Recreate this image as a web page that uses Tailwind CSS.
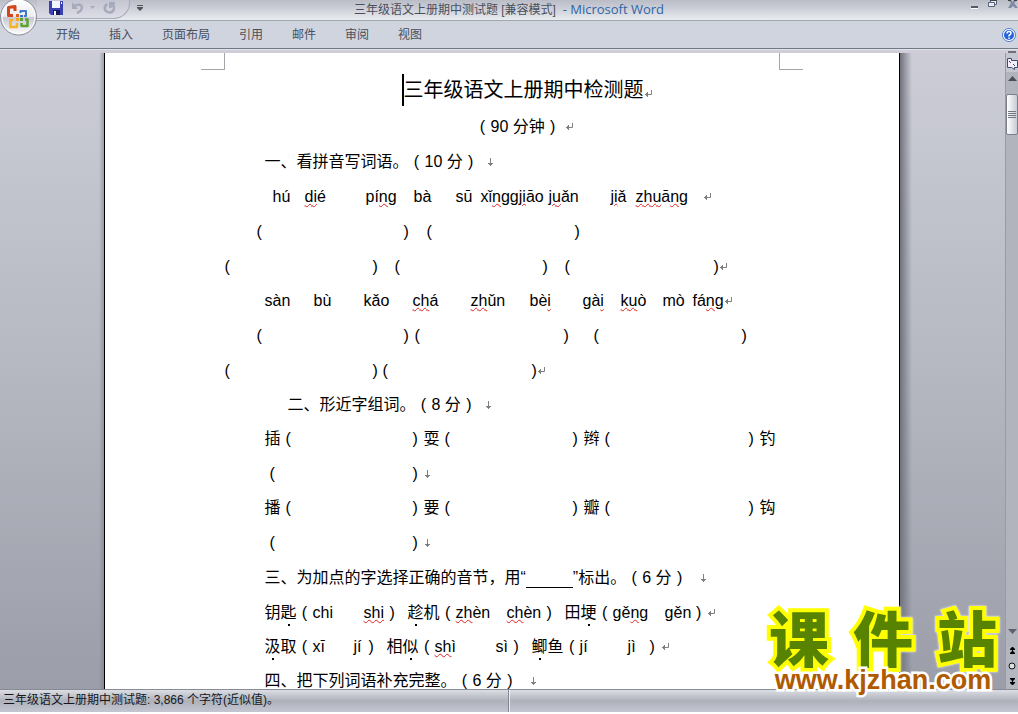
<!DOCTYPE html>
<html lang="zh-CN">
<head>
<meta charset="utf-8">
<meta name="viewport" content="width=device-width, initial-scale=1">
<title>三年级语文上册期中测试题 - Microsoft Word</title>
<script src="https://cdn.jsdelivr.net/npm/@tailwindcss/browser@4"></script>
</head>
<body class="relative flex h-screen flex-col overflow-hidden bg-[#d0d4de] font-['Liberation_Sans','Noto_Sans_CJK_SC',sans-serif] text-black">
<svg class="hidden">
  <symbol id="ret" viewBox="0 0 8 8"><path d="M7.5 0v4.5H1M3.5 2v5M2.5 3v3M1.5 4v1" fill="none" stroke="#808080"/></symbol>
  <symbol id="down" viewBox="0 0 8 8"><path d="M3.5 0v8M1 5.5h5M2 6.5h3" fill="none" stroke="#808080"/></symbol>
</svg>

<header class="relative shrink-0 text-xs text-[#4a4f5c]">
  <div class="relative flex h-[21px] items-start justify-center border-b border-[#9fa8b0] bg-linear-to-b from-[#babdc6] via-[#cfd2da] to-[#e9edef]">
    <div class="absolute top-0 left-[37px] flex h-[19px] w-[93px] items-start rounded-br-2xl border-r border-b border-[#a8abb8] bg-linear-to-b from-[#c4c5d0] to-[#dcdde6] pl-3">
      <button aria-label="保存" class="mt-px"><svg width="14" height="14" viewBox="0 0 14 14"><path d="M0 0h14v14H2L0 12z" fill="#3b41b5"/><path d="M3 0h8v7H3z" fill="#f2f4ff"/><path d="M4 9h7v5H4z" fill="#161a55"/><path d="M5 10h2v4H5z" fill="#fff"/><path d="M12 1h1v2h-1z" fill="#fff"/></svg></button>
      <button aria-label="撤消" class="mt-px ml-2"><svg width="13" height="14" viewBox="0 0 13 14"><path d="M3 5q7-3 8 1 0 4-5 6" fill="none" stroke="#a6aabd" stroke-width="2.500"/><path d="M1 1v7h6z" fill="#a6aabd"/></svg></button>
      <button aria-label="撤消选项" class="mt-1.5 ml-1.5"><svg width="5" height="3" viewBox="0 0 5 3"><path d="M0 0h5L2.500 3z" fill="#a6aabd"/></svg></button>
      <button aria-label="恢复" class="mt-px ml-2"><svg width="13" height="14" viewBox="0 0 13 14"><path d="M4 3q-4 4-1 7 4 3 7 0 2-3 0-6" fill="none" stroke="#a6aabd" stroke-width="2.500"/><path d="M6 1h6v2L8 7H6z" fill="#a6aabd"/></svg></button>
    </div>
    <button aria-label="自定义快速访问工具栏" class="absolute top-[5px] left-[137px]"><svg width="6" height="6" viewBox="0 0 6 6"><path d="M0 0h6v1H0zM0 2h6v1L3 6 0 3z" fill="#555"/></svg></button>
    <h1 class="leading-[18px] whitespace-pre">三年级语文上册期中测试题 [兼容模式] <span class="font-['Open_Sans',sans-serif] text-[13px] text-[#2f65a5]"> - Microsoft Word</span></h1>
    <div class="absolute top-0 right-0 flex items-start gap-[9px]">
      <button aria-label="最小化" class="pt-1.5"><svg width="8" height="3" viewBox="0 0 8 3"><path d="M0 0h7v2H0z" fill="#555b66"/><path d="M0 2h7v1H0z" fill="#fff"/></svg></button>
      <button aria-label="还原"><svg width="10" height="8" viewBox="0 0 10 8"><path d="M2.500 2V.5h6v4H7M.5 2.500h6v4h-6z" fill="#e8edf8" stroke="#5a6378"/><path d="M2 0h7v1H2z" fill="#444"/></svg></button>
      <button aria-label="关闭"><svg width="11" height="8" viewBox="0 0 11 8"><path d="M1 8h3l2-2 2 2h3L7 3l3-3H7L5.500 2 4 0H1l3 3z" fill="#7f8ba3"/><path d="M1 0h3v1H1zM7 0h3v1H7z" fill="#444"/></svg></button>
    </div>
  </div>
  <nav class="flex h-7 items-center gap-[29px] border-b border-[#737883] bg-[#d0d4de] pl-14">
    <button>开始</button><button>插入</button><button>页面布局</button><button>引用</button><button>邮件</button><button>审阅</button><button>视图</button>
    <button aria-label="帮助" class="mr-0.5 ml-auto"><svg width="14" height="14" viewBox="0 0 14 14"><circle cx="7" cy="7" r="6.500" fill="#fff" stroke="#4d7dd0"/><circle cx="7" cy="7" r="5" fill="#2563dc"/><path d="M5 5.500q0-2 2-2t2 1.700Q9 6.300 7 7.500V8.500M7 9.500v1.500" fill="none" stroke="#fff" stroke-width="1.500"/></svg></button>
  </nav>
  <div class="flex h-1 items-end justify-end border-t border-[#dbe6ef] bg-[#d0cdd8] pr-0.5"><i class="h-0.5 w-2 bg-[#6f727b]"></i></div>
  <button aria-label="Office 按钮" class="absolute -top-0.5 left-0">
    <svg width="38" height="38" viewBox="0 0 38 38"><defs><linearGradient id="orb" x2="0" y2="1"><stop offset="0" stop-color="#fff"/><stop offset=".48" stop-color="#ededf3"/><stop offset=".52" stop-color="#c6c7d2"/><stop offset="1" stop-color="#fff"/></linearGradient></defs>
    <circle cx="18.500" cy="19" r="18" fill="url(#orb)" stroke="#8b8d98"/><circle cx="18.500" cy="19" r="16.500" fill="none" stroke="#fff"/>
    <g fill="none" stroke-linejoin="round"><path d="M13 17.500H8.500v-8L15 8.500V13" stroke="#d2461a" stroke-width="3"/><path d="M20.500 15v-2h5.500v5h-2" stroke="#3a7cc9" stroke-width="2"/><path d="M13 22h-2.500v7h6.500v-4" stroke="#f5b32a" stroke-width="2.500"/><path d="M25 21.500h2.500v6.500h-6v-3" stroke="#5ba431" stroke-width="2.500"/></g><path d="M16 16h3v3h-3z" fill="#e0601c"/><path d="M20 17h3v2h-3z" fill="#2f6fc4"/><path d="M16 20h3v3h-3z" fill="#f2a61d"/><path d="M20 20h3v3h-3z" fill="#5ba431"/></svg>
  </button>
</header>

<div class="flex min-h-0 flex-1">
  <main class="flex min-w-0 flex-1 justify-center overflow-hidden bg-linear-to-b from-[#cccdd7] via-[#b5b8c1] to-[#9b9ea8]">
    <div class="w-2.5 shrink-0 bg-linear-to-l from-[#70737d]/50 to-transparent to-50%"></div>
    <article class="w-[796px] shrink-0 border-x border-black bg-white text-base whitespace-nowrap">
      <div class="flex h-[17px] justify-between px-24"><div class="w-6 border-r border-b border-[#a5a5ac]"></div><div class="w-6 border-b border-l border-[#a5a5ac]"></div></div>
      <div class="pl-[120px]">
        <div class="flex h-10 items-center pl-[177px]"><span class="h-8 w-0.5 bg-black"></span><h2 class="text-xl leading-10">三年级语文上册期中检测题</h2><svg class="mt-2 size-2"><use href="#ret"/></svg></div>
        <div class="flex h-[34px] items-center pl-[250px]"><span class="w-4 text-center">(</span>90 分钟<span class="w-4 text-center">)</span><svg class="ml-1 size-2"><use href="#ret"/></svg></div>
        <div class="flex h-[35px] items-center pl-10">一、看拼音写词语。<span class="w-4 text-center">(</span>10 分<span class="w-4 text-center">)</span><svg class="ml-2 size-2"><use href="#down"/></svg></div>

        <div class="flex h-[35px] items-center pl-12"><span class="w-8">hú</span><span class="w-[61px]"><u class="decoration-wavy decoration-1 decoration-[#e02020]">di</u>é</span><span class="w-12">pí<u class="decoration-wavy decoration-1 decoration-[#e02020]">ng</u></span><span class="w-[42px]">bà</span><span class="w-[25px]">sū</span><span class="w-[68px]">xǐ<u class="decoration-wavy decoration-1 decoration-[#e02020]">ngg</u><u class="decoration-wavy decoration-1 decoration-[#e02020]">ji</u>āo</span><span class="w-[62px]"><u class="decoration-wavy decoration-1 decoration-[#e02020]">ju</u>ǎn</span><span class="w-[25px]"><u class="decoration-wavy decoration-1 decoration-[#e02020]">ji</u>ǎ</span><span class="w-[67px]"><u class="decoration-wavy decoration-1 decoration-[#e02020]">zhu</u>ā<u class="decoration-wavy decoration-1 decoration-[#e02020]">ng</u></span><svg class="size-2"><use href="#ret"/></svg></div>
        <div class="flex h-[35px] items-center pl-8"><span class="w-[147px]">(</span><span class="w-[23px]">)</span><span class="w-[148px]">(</span><span>)</span></div>
        <div class="flex h-[35px] items-center"><span class="w-[148px]">(</span><span class="w-[22px]">)</span><span class="w-[148px]">(</span><span class="w-[22px]">)</span><span class="w-[149px]">(</span><span>)</span><svg class="size-2"><use href="#ret"/></svg></div>
        <div class="flex h-[34px] items-center pl-10"><span class="w-[49px]">sàn</span><span class="w-[50px]">bù</span><span class="w-[49px]">kǎo</span><span class="w-[58px]"><u class="decoration-wavy decoration-1 decoration-[#e02020]">ch</u>á</span><span class="w-[59px]"><u class="decoration-wavy decoration-1 decoration-[#e02020]">zh</u>ǔn</span><span class="w-[53px]">bè<u class="decoration-wavy decoration-1 decoration-[#e02020]">i</u></span><span class="w-[38px]">gà<u class="decoration-wavy decoration-1 decoration-[#e02020]">i</u></span><span class="w-[42px]"><u class="decoration-wavy decoration-1 decoration-[#e02020]">ku</u>ò</span><span class="w-[30px]">mò</span><span>fá<u class="decoration-wavy decoration-1 decoration-[#e02020]">ng</u></span><svg class="size-2"><use href="#ret"/></svg></div>
        <div class="flex h-[35px] items-center pl-8"><span class="w-[147px]">(</span><span class="w-[11px]">)</span><span class="w-[149px]">(</span><span class="w-[30px]">)</span><span class="w-[148px]">(</span><span>)</span></div>
        <div class="flex h-[35px] items-center"><span class="w-[148px]">(</span><span class="w-[10px]">)</span><span class="w-[149px]">(</span><span>)</span><svg class="size-2"><use href="#ret"/></svg></div>

        <div class="flex h-[34px] items-center pl-[63px]">二、形近字组词。<span class="w-4 text-center">(</span>8 分<span class="w-4 text-center">)</span><svg class="ml-2 size-2"><use href="#down"/></svg></div>
        <div class="flex h-[34px] items-center pl-10"><span class="w-[21px]">插</span><span class="w-[127px]">(</span><span class="w-[11px]">)</span><span class="w-[21px]">耍</span><span class="w-[128px]">(</span><span class="w-[11px]">)</span><span class="w-[21px]">辫</span><span class="w-[144px]">(</span><span class="w-[11px]">)</span><span>钓</span></div>
        <div class="flex h-[35px] items-center pl-[45px]"><span class="w-[143px]">(</span><span class="w-[11px]">)</span><svg class="size-2"><use href="#down"/></svg></div>
        <div class="flex h-[34px] items-center pl-10"><span class="w-[21px]">播</span><span class="w-[127px]">(</span><span class="w-[11px]">)</span><span class="w-[21px]">要</span><span class="w-[128px]">(</span><span class="w-[11px]">)</span><span class="w-[21px]">瓣</span><span class="w-[144px]">(</span><span class="w-[11px]">)</span><span>钩</span></div>
        <div class="flex h-[35px] items-center pl-[45px]"><span class="w-[143px]">(</span><span class="w-[11px]">)</span><svg class="size-2"><use href="#down"/></svg></div>

        <div class="flex h-[35px] items-center pl-10">三、为加点的字选择正确的音节，用“<span class="h-5 w-[47px] border-b border-black"></span>”标出。<span class="w-4 text-center">(</span>6 分<span class="w-4 text-center">)</span><svg class="ml-3 size-2"><use href="#down"/></svg></div>
        <div class="flex h-[35px] items-center pl-10">钥<span class="relative after:absolute after:-bottom-px after:left-[7px] after:size-0.5 after:bg-black">匙</span><span class="w-4 text-center">(</span><span class="w-[51px]">chi</span><span class="w-[22px]"><u class="decoration-wavy decoration-1 decoration-[#e02020]">shi</u></span><span class="w-[22px] pl-1">)</span><span class="relative after:absolute after:-bottom-px after:left-[7px] after:size-0.5 after:bg-black">趁</span>机<span class="w-4 text-center">(</span><span class="w-[51px]"><u class="decoration-wavy decoration-1 decoration-[#e02020]">zh</u>èn</span><span class="w-9"><u class="decoration-wavy decoration-1 decoration-[#e02020]">ch</u>èn</span><span class="w-[22px] pl-1">)</span>田<span class="relative after:absolute after:-bottom-px after:left-[7px] after:size-0.5 after:bg-black">埂</span><span class="w-4 text-center">(</span><span class="w-[52px]">gě<u class="decoration-wavy decoration-1 decoration-[#e02020]">ng</u></span><span class="w-[26px]">gěn</span><span class="w-4 text-center">)</span><svg class="size-2"><use href="#ret"/></svg></div>
        <div class="flex h-[34px] items-center pl-10"><span class="relative after:absolute after:-bottom-px after:left-[7px] after:size-0.5 after:bg-black">汲</span>取<span class="w-4 text-center">(</span><span class="w-[41px]">xī</span><span class="w-[11px]">jí</span><span class="w-[22px] pl-1">)</span>相<span class="relative after:absolute after:-bottom-px after:left-[7px] after:size-0.5 after:bg-black">似</span><span class="w-4 text-center">(</span><span class="w-[61px]"><u class="decoration-wavy decoration-1 decoration-[#e02020]">sh</u>ì</span><span class="w-[14px]">sì</span><span class="w-[22px] pl-1">)</span><span class="relative after:absolute after:-bottom-px after:left-[7px] after:size-0.5 after:bg-black">鲫</span>鱼<span class="w-4 text-center">(</span><span class="w-12">jí</span><span class="w-[22px]">jì</span><span class="w-[11px]">)</span><svg class="size-2"><use href="#ret"/></svg></div>
        <div class="flex h-[34px] items-center pl-10">四、把下列词语补充完整。<span class="w-4 text-center">(</span>6 分<span class="w-4 text-center">)</span><svg class="ml-3 size-2"><use href="#down"/></svg></div>
      </div>
    </article>
    <div class="w-3 shrink-0 bg-linear-to-r from-[#70737d] to-transparent"></div>
  </main>

  <aside aria-label="垂直滚动条" class="flex w-[13px] shrink-0 flex-col items-center border-l border-[#989ba5] bg-[#b1b4bc]">
    <button aria-label="标尺" class="shrink-0 bg-[#c5c7d1] pt-1 pb-0.5"><svg width="12" height="13" viewBox="0 0 12 13"><path d="M1.500 1.500h4v2h6v7h-3v2l-3-2h-4z" fill="#f1eef7" stroke="#3e4c70"/><path d="m3 4 2 2m2 1 2 2" stroke="#3e4c70"/></svg></button>
    <button aria-label="向上滚动" class="flex h-[22px] shrink-0 items-start pt-1"><svg width="9" height="5" viewBox="0 0 9 5"><path d="M4.500 0 9 5H0z" fill="#4a4d59"/></svg></button>
    <div class="flex h-[41px] w-full shrink-0 flex-col items-center justify-center gap-px rounded-xs border border-[#7c7f89] bg-linear-to-r from-white to-[#c9cbd6]"><i class="h-px w-2 bg-[#747782]"></i><i class="h-px w-2 bg-[#747782]"></i><i class="h-px w-2 bg-[#747782]"></i><i class="h-px w-2 bg-[#747782]"></i></div>
    <button aria-label="向下滚动" class="mt-auto flex h-[18px] shrink-0 items-start"><svg width="9" height="5" viewBox="0 0 9 5"><path d="M0 0h9L4.500 5z" fill="#5e6170"/></svg></button>
    <div class="flex w-full shrink-0 flex-col items-center gap-2 bg-[#b4b7c0] pb-1">
      <button aria-label="前一页"><svg width="7" height="7" viewBox="0 0 7 7"><path d="M3 0h1l2 2v1H4v1l2 2v1H1V6l2-2V3H1V2z"/></svg></button>
      <button aria-label="选择浏览对象"><svg width="8" height="8" viewBox="0 0 8 8"><circle cx="4" cy="4" r="3" fill="#ddd" stroke="#111"/></svg></button>
      <button aria-label="下一页"><svg class="rotate-180" width="7" height="7" viewBox="0 0 7 7"><path d="M3 0h1l2 2v1H4v1l2 2v1H1V6l2-2V3H1V2z"/></svg></button>
    </div>
  </aside>
</div>

<footer class="flex h-[25px] shrink-0 border-t border-b-2 border-t-[#888b95] border-b-white bg-linear-to-b from-[#dcdee4] via-[#aeb1ba] to-[#c4c7d1] text-xs text-[#15171c]">
  <div class="w-1/2 border-r border-[#848791] pl-[3px] leading-5">三年级语文上册期中测试题: 3,866 个字符(近似值)。</div><div class="border-l border-white/70"></div>
</footer>

<div class="absolute right-[21px] bottom-5 w-[228px] font-black">
  <div class="flex justify-between font-['Noto_Sans_CJK_SC',sans-serif] text-[60px] leading-[60px] text-[#578300] [paint-order:stroke_fill] [-webkit-text-stroke:8px_#ffff00] drop-shadow-[0_0_1px_white]"><span>课</span><span>件</span><span>站</span></div>
  <a href="http://www.kjzhan.com" class="relative block text-center text-[27px] leading-7 font-bold text-[#b05a00] [paint-order:stroke_fill] [-webkit-text-stroke:5px_white]">www.kjzhan.com</a>
</div>
</body>
</html>
